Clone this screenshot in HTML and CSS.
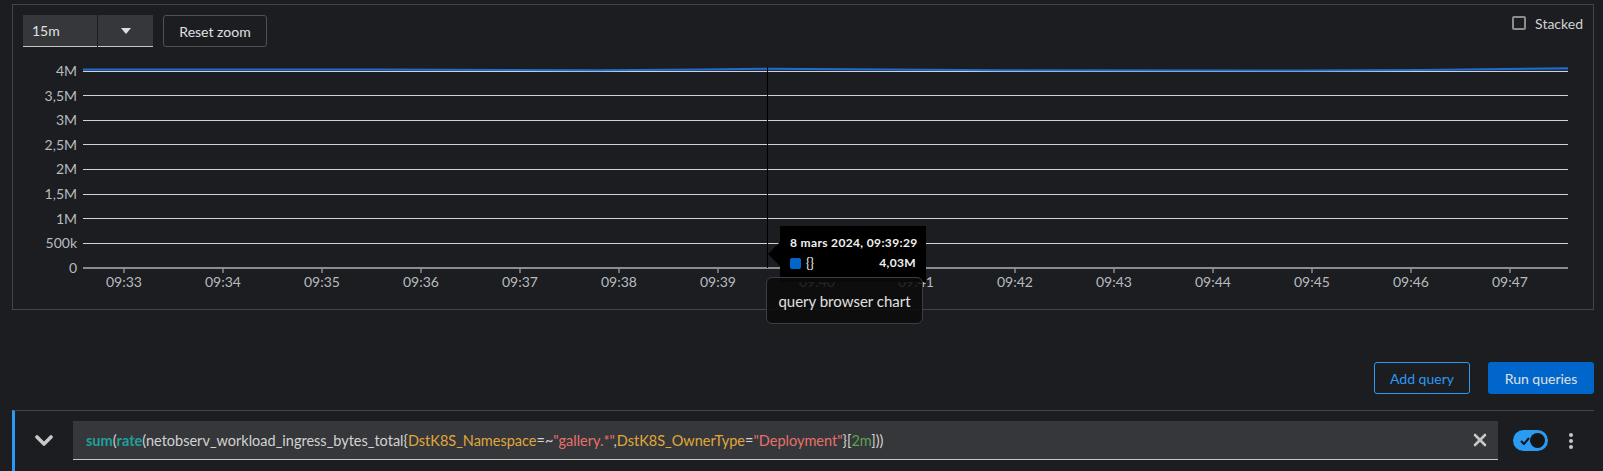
FILE: index.html
```html
<!DOCTYPE html>
<html>
<head>
<meta charset="utf-8">
<link rel="stylesheet" href="styles.css">
</head>
<body>
<div class="page">
  <section class="chart-card">
    <div class="toolbar">
      <div class="select-group">
        <div class="select-value">15m</div>
        <div class="select-toggle">
          <svg width="10" height="6" viewBox="0 0 10 6"><path d="M0 0 H10 L5 6 Z" fill="#e0e0e0"/></svg>
        </div>
      </div>
      <button class="btn-outline">Reset zoom</button>
      <label class="stacked"><span class="checkbox"></span><span>Stacked</span></label>
    </div>
    <svg class="chart" width="1579" height="261" viewBox="13 47 1579 261">
      <g class="grid">
        <line x1="83" x2="1568" y1="71.5" y2="71.5"/>
        <line x1="83" x2="1568" y1="95.5" y2="95.5"/>
        <line x1="83" x2="1568" y1="120.5" y2="120.5"/>
        <line x1="83" x2="1568" y1="144.5" y2="144.5"/>
        <line x1="83" x2="1568" y1="169.5" y2="169.5"/>
        <line x1="83" x2="1568" y1="194.5" y2="194.5"/>
        <line x1="83" x2="1568" y1="218.5" y2="218.5"/>
        <line x1="83" x2="1568" y1="243.5" y2="243.5"/>
      </g>
      <g class="ylabels">
        <text x="77" y="76">4M</text>
        <text x="77" y="101">3,5M</text>
        <text x="77" y="125">3M</text>
        <text x="77" y="150">2,5M</text>
        <text x="77" y="174">2M</text>
        <text x="77" y="199">1,5M</text>
        <text x="77" y="224">1M</text>
        <text x="77" y="248">500k</text>
        <text x="77" y="273">0</text>
      </g>
      <line class="zero" x1="83" x2="1568" y1="268" y2="268"/>
      <g class="ticks">
        <line x1="124" x2="124" y1="268" y2="273"/>
        <line x1="223" x2="223" y1="268" y2="273"/>
        <line x1="322" x2="322" y1="268" y2="273"/>
        <line x1="421" x2="421" y1="268" y2="273"/>
        <line x1="520" x2="520" y1="268" y2="273"/>
        <line x1="619" x2="619" y1="268" y2="273"/>
        <line x1="718" x2="718" y1="268" y2="273"/>
        <line x1="817" x2="817" y1="268" y2="273"/>
        <line x1="916" x2="916" y1="268" y2="273"/>
        <line x1="1015" x2="1015" y1="268" y2="273"/>
        <line x1="1114" x2="1114" y1="268" y2="273"/>
        <line x1="1213" x2="1213" y1="268" y2="273"/>
        <line x1="1312" x2="1312" y1="268" y2="273"/>
        <line x1="1411" x2="1411" y1="268" y2="273"/>
        <line x1="1510" x2="1510" y1="268" y2="273"/>
      </g>
      <g class="xlabels">
        <text x="124" y="287">09:33</text>
        <text x="223" y="287">09:34</text>
        <text x="322" y="287">09:35</text>
        <text x="421" y="287">09:36</text>
        <text x="520" y="287">09:37</text>
        <text x="619" y="287">09:38</text>
        <text x="718" y="287">09:39</text>
        <text x="817" y="287">09:40</text>
        <text x="916" y="287">09:41</text>
        <text x="1015" y="287">09:42</text>
        <text x="1114" y="287">09:43</text>
        <text x="1213" y="287">09:44</text>
        <text x="1312" y="287">09:45</text>
        <text x="1411" y="287">09:46</text>
        <text x="1510" y="287">09:47</text>
      </g>
      <path class="area" d="M83 69.5 L380 69.5 L600 70.2 L700 69.6 L768 68.8 L850 69.2 L1000 70.2 L1300 70.6 L1420 70 L1568 68.2 L1568 71 L83 71 Z"/>
      <path class="series" d="M83 69.5 L380 69.5 L600 70.2 L700 69.6 L768 68.8 L850 69.2 L1000 70.2 L1300 70.6 L1420 70 L1568 68.2"/>
      <line class="cursor" x1="767.5" x2="767.5" y1="67" y2="268"/>
    </svg>
    <div class="point-tip">
      <div class="tip-date">8 mars 2024, 09:39:29</div>
      <div class="tip-row"><span class="swatch"></span><span class="tip-name">{}</span><span class="tip-val">4,03M</span></div>
    </div>
    <div class="title-tip">query browser chart</div>
  </section>

  <div class="actions">
    <button class="btn-link-outline">Add query</button>
    <button class="btn-primary">Run queries</button>
  </div>

  <div class="query-row">
    <div class="chevron">
      <svg width="18" height="12" viewBox="0 0 18 12"><path d="M2 2 L9 9 L16 2" fill="none" stroke="#c7c7c7" stroke-width="3.6" stroke-linecap="round" stroke-linejoin="round"/></svg>
    </div>
    <div class="query-input">
      <div class="code"><span class="fn">sum</span><span class="pl">(</span><span class="fn">rate</span><span class="pl">(netobserv_workload_ingress_bytes_total{</span><span class="lbl">DstK8S_Namespace</span><span class="pl">=~</span><span class="str">"gallery.*"</span><span class="pl">,</span><span class="lbl">DstK8S_OwnerType</span><span class="pl">=</span><span class="str">"Deployment"</span><span class="pl">}[</span><span class="num">2m</span><span class="pl">]))</span></div>
      <svg class="clear" width="14" height="14" viewBox="0 0 14 14"><path d="M2 2 L12 12 M12 2 L2 12" stroke="#c7c7c7" stroke-width="2.6" stroke-linecap="round"/></svg>
    </div>
    <div class="switch">
      <svg class="check" width="10" height="8" viewBox="0 0 10 8"><path d="M1 4 L4 7 L9 1" fill="none" stroke="#151515" stroke-width="2"/></svg>
      <span class="knob"></span>
    </div>
    <div class="kebab"><span></span><span></span><span></span></div>
  </div>
</div>
</body>
</html>
```

FILE: styles.css
```css
* { box-sizing: border-box; }
html, body { margin: 0; padding: 0; }
body {
  background: #1b1d21;
  color: #e0e0e0;
  font-family: "Lato", "Open Sans", sans-serif;
  font-size: 14px;
  overflow: hidden;
  width: 1603px;
  height: 471px;
}
.page {
  padding: 4px 9px 0 12px;
}
.chart-card {
  position: relative;
  border: 1px solid #444548;
  height: 306px;
}
.toolbar {
  display: flex;
  align-items: center;
  padding: 10px 10px 0 10px;
  height: 42px;
}
.select-group {
  display: flex;
  height: 32px;
  gap: 1px;
}
.select-value {
  width: 74px;
  background: #36373a;
  border-bottom: 1px solid #c7c7c7;
  padding-left: 9px;
  display: flex;
  align-items: center;
  color: #e0e0e0;
}
.select-toggle {
  width: 55px;
  background: #36373a;
  border-bottom: 1px solid #c7c7c7;
  display: flex;
  align-items: center;
  justify-content: center;
}
.btn-outline {
  margin-left: 10px;
  height: 32px;
  width: 104px;
  background: transparent;
  border: 1px solid #4f5255;
  border-radius: 3px;
  color: #e0e0e0;
  font-family: inherit;
  font-size: 14px;
  padding: 0;
}
.stacked {
  margin-left: auto;
  align-self: flex-start;
  margin-top: 1px;
  display: flex;
  align-items: center;
  gap: 9px;
  color: #d2d2d2;
  font-size: 14px;
  height: 14px;
}
.checkbox {
  width: 14px;
  height: 14px;
  border: 2px solid #8a8d90;
  border-radius: 2px;
}
.chart {
  display: block;
}
.grid line { stroke: #d2d2d2; stroke-width: 1; }
.zero { stroke: #8a8d90; stroke-width: 2; }
.ticks line { stroke: #8a8d90; stroke-width: 1.5; }
.ylabels text {
  fill: #b8bbbe;
  font-family: "Lato", sans-serif;
  font-size: 14px;
  text-anchor: end;
}
.xlabels text {
  fill: #b8bbbe;
  font-family: "Lato", sans-serif;
  font-size: 14px;
  text-anchor: middle;
}
.series { fill: none; stroke: #1f6ccc; stroke-width: 2; }
.area { fill: #1f6ccc; opacity: 0.25; }
.cursor { stroke: #000; stroke-width: 1; }

.point-tip {
  position: absolute;
  left: 767px;
  top: 221px;
  width: 146px;
  height: 56px;
  background: #000;
  padding: 9px 10px 0 10px;
  color: #f0f0f0;
  font-size: 12px;
  white-space: nowrap;
}
.point-tip::before {
  content: "";
  position: absolute;
  left: -12px;
  top: 16px;
  border-style: solid;
  border-width: 12px 12px 12px 0;
  border-color: transparent #000 transparent transparent;
}
.tip-date { font-weight: 700; line-height: 16px; letter-spacing: 0.35px; }
.tip-row {
  display: flex;
  align-items: center;
  margin-top: 5px;
  line-height: 14px;
}
.swatch {
  width: 11px;
  height: 11px;
  background: #0066cc;
  border-radius: 2px;
  margin-right: 5px;
}
.tip-name { font-size: 13px; }
.tip-val { margin-left: auto; font-weight: 700; letter-spacing: 0.35px; }
.title-tip {
  position: absolute;
  left: 753px;
  top: 272px;
  width: 157px;
  height: 47px;
  background: rgba(10, 10, 10, 0.85);
  border: 1px solid #3c3f42;
  border-radius: 6px;
  color: #e0e0e0;
  font-size: 15px;
  display: flex;
  align-items: center;
  justify-content: center;
}

.actions {
  display: flex;
  justify-content: flex-end;
  gap: 18px;
  margin-top: 52px;
  height: 32px;
}
.btn-link-outline {
  width: 96px;
  height: 32px;
  background: transparent;
  border: 1px solid #2b9af3;
  border-radius: 3px;
  color: #2b9af3;
  font-family: inherit;
  font-size: 14px;
  padding: 0;
}
.btn-primary {
  width: 106px;
  height: 32px;
  background: #0066cc;
  border: none;
  border-radius: 3px;
  color: #e0e0e0;
  font-family: inherit;
  font-size: 14px;
  padding: 0;
}
.query-row {
  margin-top: 16px;
  border-top: 1px solid #444548;
  border-left: 3px solid #2b9af3;
  height: 61px;
  display: flex;
  align-items: flex-start;
  padding-top: 10px;
}
.chevron {
  width: 58px;
  height: 39px;
  display: flex;
  align-items: center;
  justify-content: center;
  padding-left: 0;
}
.query-input {
  width: 1425px;
  height: 39px;
  background: #36373a;
  border-bottom: 1px solid #c7c7c7;
  display: flex;
  align-items: center;
  padding: 0 10px 0 13px;
}
.code {
  flex: 1;
  color: #d2d2d2;
  font-size: 14.5px;
  white-space: nowrap;
}
.fn { color: #1fa09a; font-weight: 700; }
.pl { color: #d2d2d2; }
.lbl { color: #e0a73a; }
.str { color: #e8706b; }
.num { color: #5ba352; }
.clear { flex: none; margin-right: 1px; }
.switch {
  margin-left: 15px;
  margin-top: 9px;
  width: 35px;
  height: 21px;
  border-radius: 11px;
  background: #2b9af3;
  position: relative;
  display: flex;
  align-items: center;
  padding: 0 3px 0 7px;
}
.check { flex: none; }
.knob {
  margin-left: auto;
  width: 15px;
  height: 15px;
  border-radius: 50%;
  background: #151515;
}
.kebab {
  margin-left: 21px;
  margin-top: 12px;
  display: flex;
  flex-direction: column;
  gap: 2px;
}
.kebab span {
  width: 4px;
  height: 4px;
  border-radius: 50%;
  background: #c7c7c7;
}
```
